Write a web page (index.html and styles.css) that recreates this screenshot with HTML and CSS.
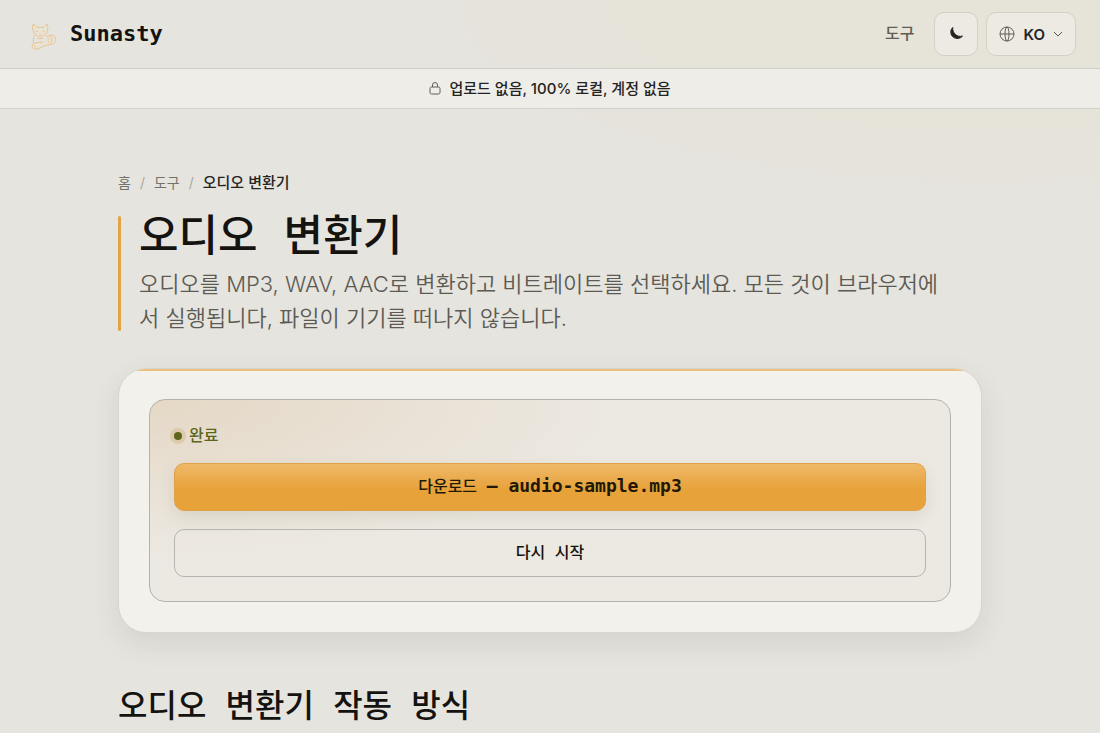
FILE: index.html
```html
<!DOCTYPE html>
<html lang="ko">
<head>
    <meta charset="UTF-8">
    <meta name="viewport" content="width=device-width, initial-scale=1.0">
    <title>오디오 변환기 - Sunasty</title>
    <link rel="stylesheet" href="styles.css">
</head>
<body>
    <header class="header">
        <a class="brand" href="#">
            <svg class="brand-logo" viewBox="0 0 36 36" aria-hidden="true">
                <path d="M9.500 16C8.500 13 8.300 10 9 8.500c2 .2 3.300 1.500 4 3q3-1 6.500 0c.8-1.500 2.200-2.800 4-3 .6 2 .3 5-.5 7.500-1 3-4 4.300-6.700 4.300S10.500 19 9.500 16Z"/>
                <path d="M10.300 19.500c-.9 2.500-1.200 5-.8 7.500M22.500 19.500c1.600 2 2.400 4.500 1.900 7.500M13.500 22q1.500 1.500 5.500 0"/>
                <path d="M23.500 20.500c3-2.500 7-1.500 8 1.500 1 3.500-1.200 6-5 6.500-4 .5-7.500 1.500-10.500 3.500-2.700 1.600-6 1.500-7.300-.2-1.300-2-.4-4 1.600-4.500 3.500-.8 6-1 9-1.300"/>
                <path d="M25.500 20.500c2.200.8 2.800 4.500 1 7M12 15.500q1-.8 2 0M18.500 15.500q1-.8 2 0M15.500 17.800l.8.700.8-.7M10 29.500l1.800 2"/>
            </svg>
            <span>Sunasty</span>
        </a>
        <nav class="nav">
            <a class="nav-link" href="#">도구</a>
            <div class="nav-actions">
                <button class="nav-btn" type="button" aria-label="다크 모드">
                    <svg width="16" height="18" viewBox="0 0 16 18" aria-hidden="true">
                        <path d="M4.800 2.500C2 5 2.200 9.800 5.300 12.100c3 2.200 7 1.600 9.200-1-2.500.7-5.200.2-7-1.600C5.300 7.500 4.400 5 4.800 2.500Z" fill="currentColor" stroke="currentColor" stroke-linejoin="round"/>
                    </svg>
                </button>
                <button class="nav-btn" type="button" aria-label="언어">
                    <svg width="16" height="16" viewBox="0 0 16 16" fill="none" stroke="currentColor" class="icon-soft" aria-hidden="true">
                        <circle cx="8" cy="8" r="7"/>
                        <ellipse cx="8" cy="8" rx="2" ry="7"/>
                        <path d="M1 8h14"/>
                    </svg>
                    <span>KO</span>
                    <svg width="10" height="10" viewBox="0 0 10 10" fill="none" stroke="currentColor" class="icon-soft" aria-hidden="true">
                        <path d="m1 3 4 4 4-4"/>
                    </svg>
                </button>
            </div>
        </nav>
    </header>

    <div class="notice">
        <svg width="12" height="14" viewBox="0 0 12 14" fill="none" stroke="currentColor" class="icon-soft" aria-hidden="true">
            <rect x="1" y="6" width="10" height="7" rx="1.500"/>
            <path d="M3.500 6V4a2.500 2.500 0 0 1 5 0v2"/>
        </svg>
        <span>업로드 없음, 100% 로컬, 계정 없음</span>
    </div>

    <main class="container">
        <nav class="breadcrumb">
            <a href="#">홈</a>
            <span class="sep">/</span>
            <a href="#">도구</a>
            <span class="sep">/</span>
            <span class="current">오디오 변환기</span>
        </nav>

        <div class="hero">
            <h1>오디오 변환기</h1>
            <p>오디오를 MP3, WAV, AAC로 변환하고 비트레이트를 선택하세요. 모든 것이 브라우저에서 실행됩니다, 파일이 기기를 떠나지 않습니다.</p>
        </div>

        <section class="card">
            <div class="result">
                <p class="status">완료</p>
                <button class="btn btn-primary" type="button">다운로드 <span class="filename">— audio-sample.mp3</span></button>
                <button class="btn btn-ghost" type="button">다시 시작</button>
            </div>
        </section>

        <h2>오디오 변환기 작동 방식</h2>
    </main>
</body>
</html>
```
FILE: styles.css
```css
* {
    box-sizing: border-box;
}
body {
    margin: 0;
    font-family: Inter, "Noto Sans CJK KR", sans-serif;
    color: #14130f;
    background: radial-gradient(ellipse 640px 220px at 90% 0, #e6e3d8, #e6e3da 60%, rgba(230, 227, 218, 0)) no-repeat #e5e4df;
}
a {
    color: inherit;
    text-decoration: none;
}
h1, h2, p {
    margin: 0;
}
h1, h2, .brand, .btn {
    font-family: "DejaVu Sans Mono", "Noto Sans CJK KR", monospace;
}
h1, h2, .btn {
    font-weight: 500;
}

/* header */
.header {
    display: flex;
    align-items: center;
    justify-content: space-between;
    padding: 12px 24px;
    border-bottom: 1px solid #cfcec9;
}
.brand {
    display: flex;
    align-items: center;
    gap: 10px;
    font-size: 22px;
    font-weight: 700;
    line-height: 40px;
}
.brand-logo {
    width: 36px;
    height: 36px;
    fill: rgba(240, 225, 200, 0.4);
    stroke: #eac48d;
    stroke-width: 1;
    stroke-linejoin: round;
}
.nav {
    display: flex;
    align-items: center;
    gap: 20px;
}
.nav-link {
    padding-bottom: 4px;
    font-size: 16px;
    font-weight: 500;
    color: #5f5d56;
}
.nav-actions {
    display: flex;
    gap: 8px;
}
.nav-btn {
    display: flex;
    align-items: center;
    justify-content: center;
    gap: 8px;
    min-width: 44px;
    height: 44px;
    padding: 0 12px;
    border: 1px solid #d3d0c6;
    border-radius: 10px;
    background: #edeae3;
    color: #24231f;
    font-family: inherit;
    font-size: 15px;
    font-weight: 600;
    cursor: pointer;
}
.icon-soft {
    color: #5f5d56;
}
.notice {
    display: flex;
    align-items: center;
    justify-content: center;
    gap: 8px;
    height: 40px;
    padding-bottom: 2px;
    border-bottom: 1px solid #d1d0cb;
    background: #eeede8;
    color: #24231f;
    font-size: 15px;
    font-weight: 500;
}

/* page */
.container {
    max-width: 912px;
    margin: 0 auto;
    padding: 64px 24px;
}
.breadcrumb {
    display: flex;
    gap: 9px;
    font-size: 14px;
    line-height: 20px;
    color: #74726a;
}
.sep {
    color: #aaa8a0;
}
.current {
    color: #24231f;
    font-size: 15px;
    font-weight: 500;
}
.hero {
    position: relative;
    margin-top: 23px;
    padding-left: 21px;
}
.hero::before {
    content: "";
    position: absolute;
    left: 0;
    top: 0;
    bottom: 4px;
    width: 3px;
    border-radius: 2px;
    background: #e2a344;
}
h1 {
    font-size: 43px;
    line-height: 40px;
}
.hero p {
    margin-top: 11px;
    padding-right: 24px;
    font-size: 22px;
    font-weight: 350;
    line-height: 34px;
    color: #5c5a53;
}
.card {
    position: relative;
    overflow: hidden;
    margin-top: 33px;
    padding: 30px;
    border: 1px solid #d6d5cf;
    border-radius: 28px;
    background: #f2f1ec;
    box-shadow: 0 10px 28px rgba(60, 58, 40, 0.1);
}
.card::before {
    content: "";
    position: absolute;
    left: 0;
    top: 0;
    right: 0;
    height: 2px;
    background: #edbf7c;
}
.result {
    display: flex;
    flex-direction: column;
    padding: 24px;
    border: 1px solid #b5b2a9;
    border-radius: 16px;
    background: radial-gradient(ellipse 60% 80% at 0 0, #e5d8c6, rgba(229, 216, 198, 0)) #ece9e2;
}
.status {
    display: flex;
    align-items: center;
    gap: 7px;
    margin-bottom: 16px;
    font-size: 16px;
    font-weight: 500;
    line-height: 23px;
    color: #5a661b;
}
.status::before {
    content: "";
    width: 8px;
    height: 8px;
    border-radius: 50%;
    background: #5a661b;
    box-shadow: 0 0 0 4px rgba(200, 170, 110, 0.35);
}
.btn {
    height: 48px;
    padding: 0 16px 4px;
    border-radius: 10px;
    font-size: 16px;
    cursor: pointer;
}
.btn-primary {
    margin-bottom: 18px;
    border: 1px solid #dfa14a;
    background: linear-gradient(#efb869, #e7a23a 55%);
    color: #221806;
    box-shadow: 0 6px 16px rgba(80, 70, 30, 0.1);
}
.filename {
    font-size: 18px;
    font-weight: 700;
}
.btn-ghost {
    border: 1px solid #b5b4ae;
    background: transparent;
    color: #14130f;
}
h2 {
    margin-top: 53px;
    font-size: 32px;
    line-height: 40px;
}
```
